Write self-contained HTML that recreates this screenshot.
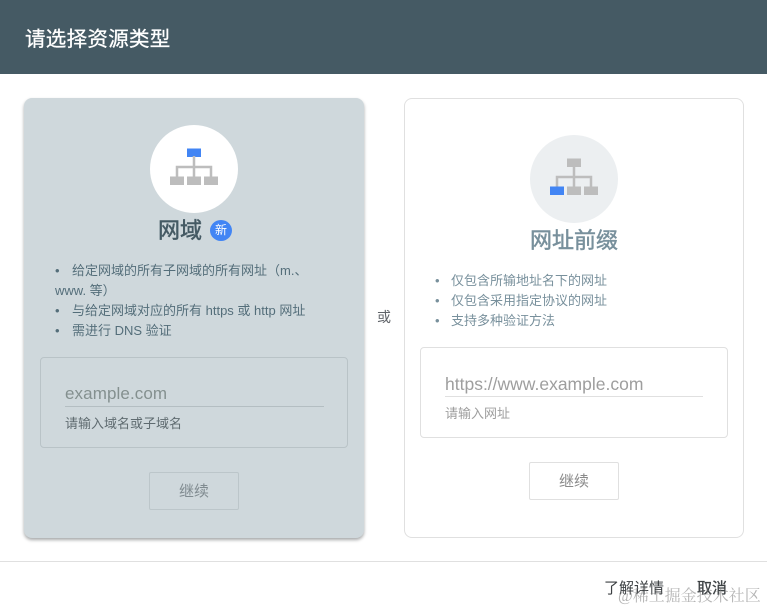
<!DOCTYPE html>
<html><head><meta charset="utf-8">
<style>
html,body{margin:0;padding:0;background:#fff}
body{width:767px;height:612px;position:relative;overflow:hidden;font-family:"Liberation Sans","Noto Sans CJK SC",sans-serif}
.a{position:absolute;white-space:nowrap}
.box{position:absolute;box-sizing:border-box}
#w{position:absolute;left:0;top:0;width:767px;height:612px;filter:blur(.35px)}
</style></head><body><div id="w">
<div class="box" style="left:0;top:0;width:767px;height:74px;background:#455a64"></div>
<div class="a" style="left:25px;top:26px;font-size:20.500px;line-height:28px;color:#fff;letter-spacing:.3px;-webkit-text-stroke:.3px #fff">请选择资源类型</div>

<div class="box" style="left:24px;top:98px;width:340px;height:440px;background:#cfd8dc;border-radius:8px;box-shadow:0 2px 3px rgba(60,64,67,.45)"></div>
<div class="box" style="left:150px;top:125px;width:88px;height:88px;border-radius:50%;background:#fff"></div>
<svg class="a" style="left:170px;top:148px" width="48" height="38" viewBox="0 0 48 38">
<rect x="17" y="0.500" width="14" height="8.500" fill="#4285f4"/>
<path d="M24 8v21M7 29v-10h34v10" fill="none" stroke="#bdbdbd" stroke-width="2.500"/>
<rect x="0" y="28.500" width="14" height="8.500" fill="#bdbdbd"/><rect x="17" y="28.500" width="14" height="8.500" fill="#bdbdbd"/><rect x="34" y="28.500" width="14" height="8.500" fill="#bdbdbd"/>
</svg>
<div class="a" style="left:158px;top:216px;font-size:22px;line-height:30px;color:#455a64;-webkit-text-stroke:.5px #455a64">网域</div>
<div class="a" style="left:210px;top:220px;width:22px;height:21px;border-radius:50%;background:#4285f4;color:#fff;font-size:12px;line-height:21px;text-align:center">新</div>
<div class="a" style="left:55px;top:261px;width:270px;font-size:13px;line-height:20px;color:#546e7a;white-space:normal">
<span style="display:inline-block;width:17px">•</span>给定网域的所有子网域的所有网址（m.、<br>www. 等）<br>
<span style="display:inline-block;width:17px">•</span>与给定网域对应的所有 https 或 http 网址<br>
<span style="display:inline-block;width:17px">•</span>需进行 DNS 验证</div>
<div class="box" style="left:40px;top:357px;width:308px;height:91px;border:1px solid #b9c3c7;border-radius:4px"></div>
<div class="a" style="left:65px;top:384px;font-size:17px;line-height:20px;letter-spacing:.1px;color:#84908f">example.com</div>
<div class="box" style="left:65px;top:406px;width:259px;height:1px;background:#b4bec2"></div>
<div class="a" style="left:65px;top:415px;font-size:13px;line-height:18px;color:#5f6b70">请输入域名或子域名</div>
<div class="box" style="left:149px;top:472px;width:90px;height:38px;border:1px solid #bcc6ca;border-radius:2px;text-align:center;font-size:15px;line-height:37px;color:#808b90">继续</div>

<div class="a" style="left:377px;top:307px;font-size:14px;line-height:20px;color:#5f6368">或</div>

<div class="box" style="left:404px;top:98px;width:340px;height:440px;border:1px solid #e0e0e0;border-radius:8px;background:#fff"></div>
<div class="box" style="left:530px;top:135px;width:88px;height:88px;border-radius:50%;background:#eceff1"></div>
<svg class="a" style="left:550px;top:158px" width="48" height="38" viewBox="0 0 48 38">
<rect x="17" y="0.500" width="14" height="8.500" fill="#bdbdbd"/>
<path d="M24 8v21M7 29v-10h34v10" fill="none" stroke="#bdbdbd" stroke-width="2.500"/>
<rect x="0" y="28.500" width="14" height="8.500" fill="#4285f4"/><rect x="17" y="28.500" width="14" height="8.500" fill="#bdbdbd"/><rect x="34" y="28.500" width="14" height="8.500" fill="#bdbdbd"/>
</svg>
<div class="a" style="left:530px;top:226px;font-size:22px;line-height:30px;color:#78909c;-webkit-text-stroke:.5px #78909c">网址前缀</div>
<div class="a" style="left:435px;top:271px;font-size:13px;line-height:20px;color:#78909c">
<span style="display:inline-block;width:16px">•</span>仅包含所输地址名下的网址<br>
<span style="display:inline-block;width:16px">•</span>仅包含采用指定协议的网址<br>
<span style="display:inline-block;width:16px">•</span>支持多种验证方法</div>
<div class="box" style="left:420px;top:347px;width:308px;height:91px;border:1px solid #e0e0e0;border-radius:4px"></div>
<div class="a" style="left:445px;top:374px;font-size:17.500px;line-height:20px;color:#9e9e9e">https://www.example.com</div>
<div class="box" style="left:445px;top:396px;width:258px;height:1px;background:#e0e0e0"></div>
<div class="a" style="left:445px;top:405px;font-size:13px;line-height:18px;color:#9e9e9e">请输入网址</div>
<div class="box" style="left:529px;top:462px;width:90px;height:38px;border:1px solid #e0e0e0;border-radius:2px;text-align:center;font-size:15px;line-height:37px;color:#8a8a8a">继续</div>

<div class="box" style="left:0;top:561px;width:767px;height:1px;background:#e0e0e0"></div>
<div class="a" style="left:604px;top:579px;font-size:15px;line-height:20px;color:#3c4043">了解详情</div>
<div class="a" style="left:697px;top:579px;font-size:15px;line-height:20px;color:#3c4043;-webkit-text-stroke:.3px #3c4043">取消</div>
<div class="a" style="left:618px;top:587px;font-size:16px;line-height:20px;color:rgba(120,120,120,.55);font-family:'Liberation Serif','Noto Serif CJK SC',serif">@稀土掘金技术社区</div>
</div></body></html>
